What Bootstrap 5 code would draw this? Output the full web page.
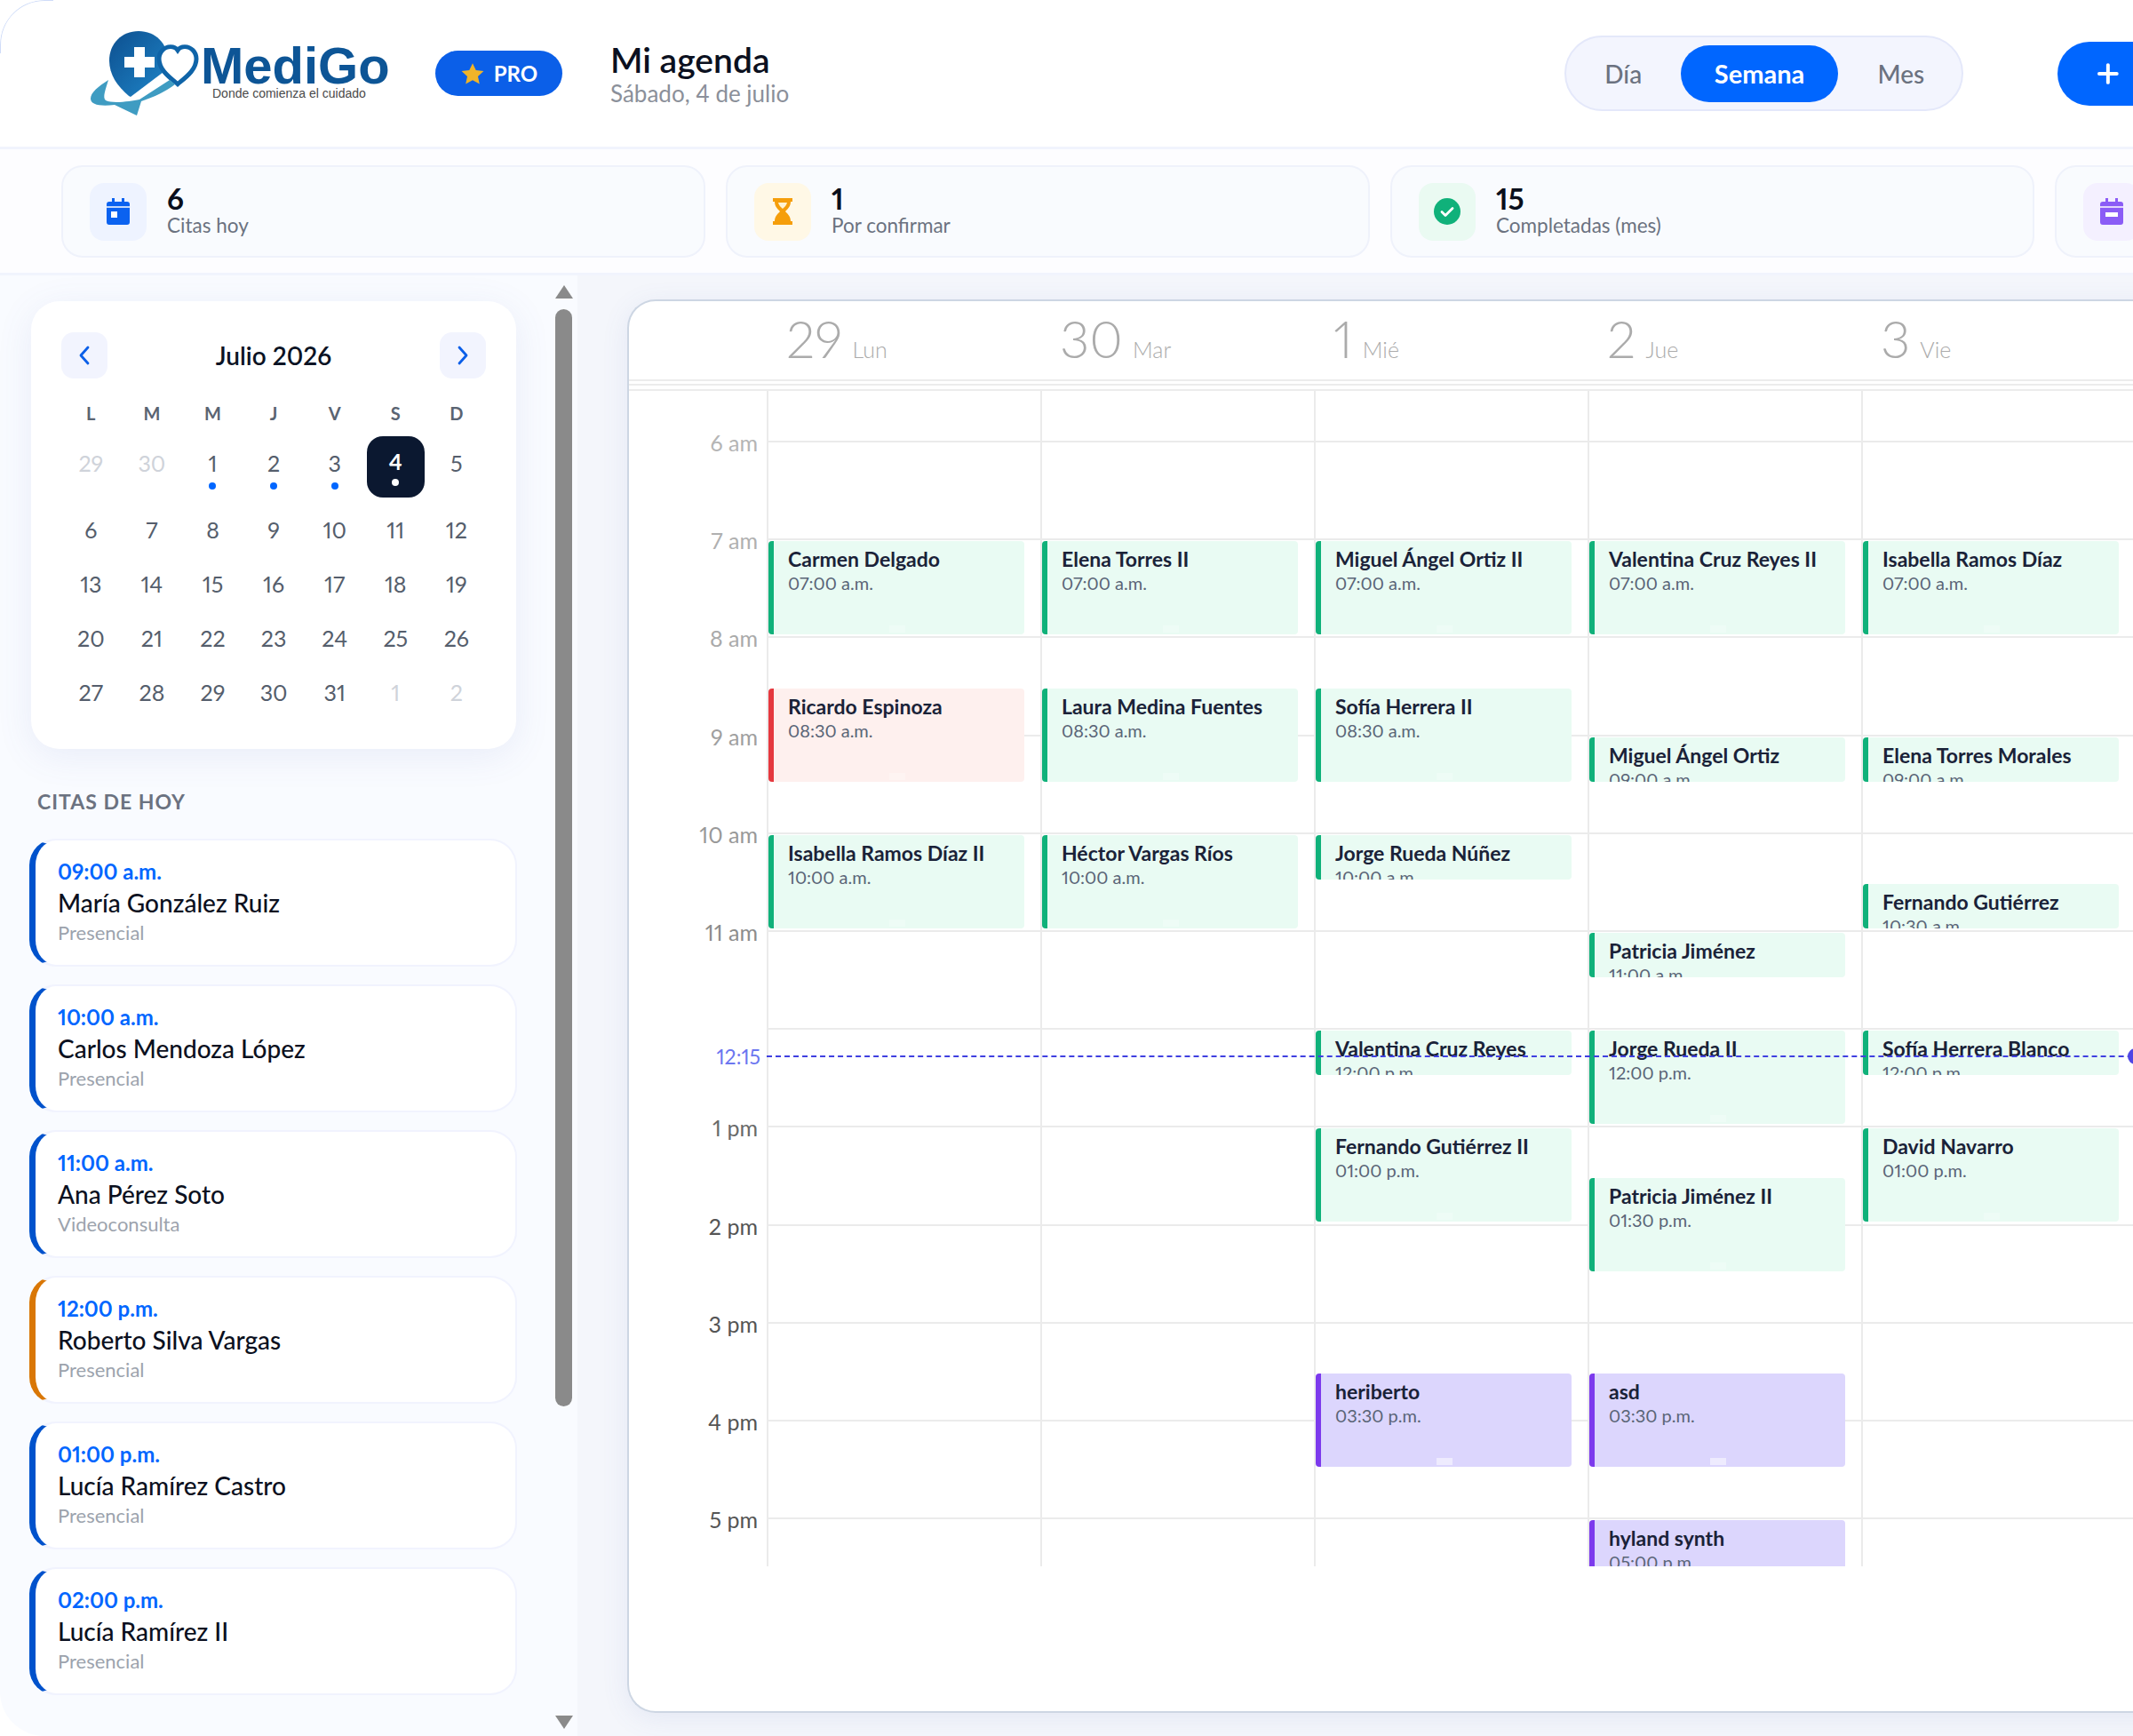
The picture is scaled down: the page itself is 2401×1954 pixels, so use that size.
<!DOCTYPE html>
<html lang="es">
<head>
    <meta charset="UTF-8">
    <meta name="viewport" content="width=device-width, initial-scale=1.0">
    <title>Mi agenda</title>
    <link href="https://cdn.jsdelivr.net/npm/bootstrap@5.3.2/dist/css/bootstrap.min.css" rel="stylesheet">
    <style>
        html, body { margin: 0; background: #fff; overflow: hidden; }
        body { font-family: "Lato", "Liberation Sans", sans-serif; font-variant-numeric: proportional-nums; color: #0f1729; width: 2401px; height: 1954px; }
        .app-shell { width: 2401px; height: 1954px; overflow: hidden; border-radius: 50px 0 0 50px; position: relative; }
        .app-shell::before { content: ""; position: absolute; left: 0; top: 0; width: 60px; height: 60px; border-top: 1px solid #cfdcf8; border-left: 1px solid #cfdcf8; border-top-left-radius: 50px; z-index: 5; }
        .app-inner { width: 2700px; }

        .top-bar { height: 168px; padding-left: 100px; padding-right: 164px; border-bottom: 3px solid #f1f4fd; background: #fff; }
        .logo-box { width: 340px; height: 105px; flex: none; }
        .pro-pill { width: 143px; height: 51px; margin-left: 50px; background: #0b5fe8; color: #fff; font-size: 24px; font-weight: 700; gap: 10px; }
        .title-box { margin-left: 54px; }
        .page-title { font-size: 39px; font-weight: 600; line-height: 44px; color: #0b1020; margin: 0; }
        .page-sub { font-size: 26px; line-height: 32px; color: #8b909a; }
        .seg-box { width: 449px; height: 85px; background: #f3f5fe; border: 2px solid #e4e8fa; padding: 0 9px; }
        .seg-btn { height: 64px; font-size: 28px; line-height: 64px; text-align: center; color: #6b7280; font-weight: 500; }
        .seg-dia { width: 121px; padding-right: 10px; }
        .seg-sem { width: 177px; background: #0066ff; color: #fff; font-weight: 700; font-size: 29px; }
        .seg-mes { width: 131px; padding-left: 12px; }
        .new-btn { width: 220px; height: 72px; margin-left: 106px; background: #0066ff; color: #fff; font-size: 27px; font-weight: 700; flex: none; border: 0; padding-left: 44px; gap: 12px; }
        .new-btn:hover { background: #0066ff; color: #fff; }

        .stat-row { height: 142px; padding: 18px 0 17px 69px; gap: 23px; background: #fdfdff; border-bottom: 3px solid #f1f4fd; }
        .stat-box { width: 725px; height: 104px; flex: none; background: #f9fbfe; border: 2px solid #eff2fb; border-radius: 24px; padding-left: 30px; gap: 23px; }
        .stat-ico { width: 64px; height: 65px; border-radius: 16px; flex: none; }
        .ico-blue { background: #eef3ff; }
        .ico-amber { background: #fff8e6; }
        .ico-green { background: #eafaf2; }
        .ico-purple { background: #f4f0ff; }
        .stat-num { font-size: 33px; line-height: 32px; font-weight: 700; color: #0a0f1c; }
        .stat-lbl { font-size: 22.5px; line-height: 30px; color: #6b7280; }

        .side-col { width: 650px; height: 1644px; background: #f9fbff; flex: none; }
        .side-main { width: 625px; padding: 29px 0 0 35px; flex: none; }
        .cal-box { width: 546px; height: 504px; background: #fff; border-radius: 32px; box-shadow: 0 8px 40px rgba(90, 110, 190, .1); padding: 35px 34px 0; }
        .cal-nav { width: 52px; height: 52px; background: #f2f4fe; border-radius: 14px; flex: none; }
        .cal-title { font-size: 28px; font-weight: 600; color: #0b1324; }
        .cal-grid { display: grid; grid-template-columns: repeat(7, 68.6px); margin-top: 22px; margin-left: -1px; }
        .cal-wd { height: 43px; line-height: 34px; text-align: center; font-size: 20px; font-weight: 700; color: #5a6472; }
        .cal-day { height: 61px; text-align: center; font-size: 25px; line-height: 60px; color: #555e6c; position: relative; }
        .cal-first { height: 75px; line-height: 61px; padding-top: 0; }
        .cal-off { color: #cfd3da; }
        .cal-dot { position: absolute; left: 50%; bottom: 15px; width: 8px; height: 8px; margin-left: -4px; border-radius: 50%; background: #0066ff; }
        .cal-today { width: 65px; height: 69px; margin: 0 auto; background: #0b1830; border-radius: 18px; color: #fff; font-weight: 700; line-height: 56px; position: relative; }
        .cal-today .cal-dot { background: #fff; bottom: 13px; }
        .sec-label { font-size: 23px; font-weight: 700; color: #6b7280; letter-spacing: 1px; margin: 43px 0 0 7px; line-height: 32px; }
        .appt-list { margin: 26px 0 0 -2px; width: 549px; gap: 20px; }
        .appt-box { height: 144px; background: #fff; border: 2px solid #f1f3fe; border-left: 7px solid #0052cc; border-radius: 30px; padding: 18px 0 0 25px; }
        .appt-orange { border-left-color: #d97706; }
        .appt-time { font-size: 24px; line-height: 34px; font-weight: 700; color: #0066ff; }
        .appt-name { font-size: 28px; line-height: 36px; font-weight: 500; color: #0b1020; }
        .appt-kind { font-size: 22px; line-height: 32px; color: #9ca3ad; }
        .scroll-col { width: 19px; height: 1644px; padding-top: 11px; flex: none; }
        .scroll-thumb { width: 19px; height: 1235px; margin-top: 12px; background: #8a8a8a; border-radius: 10px; }
        .arrow-up, .arrow-down { width: 0; height: 0; border-left: 10px solid transparent; border-right: 10px solid transparent; }
        .arrow-up { border-bottom: 15px solid #8a8a8a; }
        .arrow-down { border-top: 15px solid #8a8a8a; margin-top: 348px; }

        .main-col { height: 1644px; background: #f4f6fb; padding: 27px 0 0 56px; flex: 1 1 auto; }
        .week-box { width: 2005px; height: 1591px; background: #fff; border: 2px solid #cdd6e3; border-right: 0; border-radius: 32px 0 0 32px; box-shadow: 0 6px 30px rgba(90, 110, 190, .1); }
        .week-head { height: 101px; border-bottom: 2px solid #ececec; }
        .head-inner { height: 90px; border-bottom: 2px solid #ececec; padding-left: 155px; }
        .head-rule { height: 2px; margin-top: 3px; background: #ececec; }
        .head-day { width: 308px; padding: 7px 0 0 22px; color: #ababab; font-weight: 300; line-height: 70px; flex: none; }
        .head-num { font-size: 58px; }
        .head-wd { font-size: 25px; margin-left: 11px; }
        .week-body { height: 1323px; overflow: hidden; position: relative; }
        .time-col { width: 155px; padding-top: 46px; flex: none; }
        .time-lbl { height: 110.2px; line-height: 24px; font-size: 25px; padding-right: 10px; text-align: right; }
        .day-col { width: 308px; flex: none; border-left: 2px solid #ebebeb; position: relative; }
        .hour-line { position: absolute; left: 0; right: 0; height: 2px; background: #ebebeb; }
        .ev-item { position: absolute; left: 0; width: 288px; overflow: hidden; border-left: 6px solid #10b17a; background: #e9fbf3; border-radius: 4px; padding: 6px 0 0 16px; }
        .ev-red { border-left-color: #e5393f; background: #fef0ee; }
        .ev-violet { border-left-color: #7c3aed; background: #dcd6fd; }
        .ev-name { font-size: 23px; line-height: 28px; font-weight: 700; color: #1a2238; white-space: nowrap; }
        .ev-time { font-size: 20px; line-height: 26px; color: #5a6577; white-space: nowrap; }
        .ev-grip { position: absolute; bottom: 2px; left: 46%; width: 18px; height: 8px; background: rgba(255, 255, 255, .25); }
        .ev-violet .ev-grip { background: rgba(255, 255, 255, .5); }
        .now-line { position: absolute; left: 155px; right: 0; top: 748px; border-top: 2px dashed #4040e0; z-index: 3; }
        .now-lbl { position: absolute; left: 0; width: 148px; top: 737px; text-align: right; font-size: 23px; line-height: 24px; color: #6b76f0; }
        .now-dot { position: absolute; left: 1687px; top: 740px; width: 18px; height: 18px; border-radius: 50%; background: #4f46e5; z-index: 3; }
    </style>
</head>
<body>

<div class="app-shell">
<div class="app-inner">

    <header class="top-bar d-flex align-items-center">
        <svg class="logo-box" viewBox="100 30 340 105" xmlns="http://www.w3.org/2000/svg">
            <defs>
                <linearGradient id="pinGrad" x1="0" y1="0" x2="1" y2="1">
                    <stop offset="0" stop-color="#0d4f8f"/>
                    <stop offset="1" stop-color="#1f86c9"/>
                </linearGradient>
            </defs>
            <path d="M156 35c-19 0-33 14-33 33 0 16 9 29 22 40l2 1 41-31c1-3 1-7 1-10 0-19-14-33-33-33z" fill="url(#pinGrad)"/>
            <path d="M151 53h12v11h11v12h-11v11h-12V76h-11V64h11z" fill="#fff"/>
            <path d="M200 113c-8-7-21-16-21-29 0-8 6-14 13-14 3 0 6 1 8 4 2-3 5-4 8-4 7 0 13 6 13 14 0 13-13 22-21 29z" fill="#fff" stroke="#0f64a8" stroke-width="5" transform="translate(0 -16) scale(1 .98)"/>
            <path d="M122 90c-11 7-20 14-20 21 0 7 11 9 27 7l25 12 5-16c15-5 27-11 38-19l-6-5-34 22c-10 2-30 5-38 1-4-3 0-13 3-23z" fill="#3f9cc2"/>
            <text x="226" y="94" font-family="Liberation Sans, sans-serif" font-weight="700" font-size="58" fill="#0d5596">MediGo</text>
            <text x="239" y="110" font-family="Liberation Sans, sans-serif" font-size="14" fill="#4a4a4a">Donde comienza el cuidado</text>
        </svg>
        <div class="pro-pill rounded-pill d-flex align-items-center justify-content-center">
            <svg width="28" height="26" viewBox="0 0 24 23"><path d="M12 1l3.300 7 7.700.9-5.700 5.200 1.600 7.600L12 18l-6.900 3.700 1.600-7.600L1 8.900 8.700 8z" fill="#f0b429"/></svg>
            <span>PRO</span>
        </div>
        <div class="title-box">
            <h1 class="page-title">Mi agenda</h1>
            <div class="page-sub">Sábado, 4 de julio</div>
        </div>
        <div class="seg-box rounded-pill d-flex align-items-center ms-auto">
            <div class="seg-btn seg-dia">Día</div>
            <div class="seg-btn seg-sem rounded-pill">Semana</div>
            <div class="seg-btn seg-mes">Mes</div>
        </div>
        <button class="btn new-btn rounded-pill d-flex align-items-center" type="button">
            <svg width="26" height="26" viewBox="0 0 26 26"><path d="M13 3v20M3 13h20" stroke="#fff" stroke-width="4" stroke-linecap="round"/></svg>
            <span>Nueva cita</span>
        </button>
    </header>

    <section class="stat-row d-flex">
        <div class="stat-box d-flex align-items-center">
            <div class="stat-ico ico-blue d-flex align-items-center justify-content-center">
                <svg width="26" height="30" viewBox="0 0 26 30"><path d="M6 0h3v4h8V0h3v4h3a3 3 0 0 1 3 3v20a3 3 0 0 1-3 3H3a3 3 0 0 1-3-3V7a3 3 0 0 1 3-3h3z" fill="#0b62f0"/><path d="M0 10h26" stroke="#fff" stroke-width="1.500"/><rect x="5" y="15" width="7" height="7" fill="#fff"/></svg>
            </div>
            <div><div class="stat-num">6</div><div class="stat-lbl">Citas hoy</div></div>
        </div>
        <div class="stat-box d-flex align-items-center">
            <div class="stat-ico ico-amber d-flex align-items-center justify-content-center">
                <svg width="24" height="30" viewBox="0 0 24 30"><path d="M1 0h22v4h-2c0 5-3 8-6 11 3 3 6 6 6 11h2v4H1v-4h2c0-5 3-8 6-11C6 12 3 9 3 4H1z" fill="#f59e0b"/><path d="M7 5h10c-.5 3-3 5-5 7-2-2-4.500-4-5-7z" fill="#fff3d1"/></svg>
            </div>
            <div><div class="stat-num">1</div><div class="stat-lbl">Por confirmar</div></div>
        </div>
        <div class="stat-box d-flex align-items-center">
            <div class="stat-ico ico-green d-flex align-items-center justify-content-center">
                <svg width="30" height="30" viewBox="0 0 30 30"><circle cx="15" cy="15" r="15" fill="#10b17a"/><path d="M9 15.500l4 4 8-8" fill="none" stroke="#fff" stroke-width="2.800" stroke-linecap="round" stroke-linejoin="round"/></svg>
            </div>
            <div><div class="stat-num">15</div><div class="stat-lbl">Completadas (mes)</div></div>
        </div>
        <div class="stat-box d-flex align-items-center">
            <div class="stat-ico ico-purple d-flex align-items-center justify-content-center">
                <svg width="26" height="30" viewBox="0 0 26 30"><path d="M6 0h3v4h8V0h3v4h3a3 3 0 0 1 3 3v20a3 3 0 0 1-3 3H3a3 3 0 0 1-3-3V7a3 3 0 0 1 3-3h3z" fill="#8b5cf6"/><path d="M0 10h26" stroke="#fff" stroke-width="1.500"/><rect x="6" y="16" width="14" height="5" fill="#fff"/></svg>
            </div>
            <div><div class="stat-num">2</div><div class="stat-lbl">Canceladas</div></div>
        </div>
    </section>

    <div class="d-flex">
        <aside class="side-col d-flex">
            <div class="side-main">
                <div class="cal-box">
                    <div class="d-flex align-items-center justify-content-between">
                        <div class="cal-nav d-flex align-items-center justify-content-center">
                            <svg width="14" height="24" viewBox="0 0 14 24"><path d="M11 3L3 12l8 9" fill="none" stroke="#0b5fe8" stroke-width="2.800" stroke-linecap="round" stroke-linejoin="round"/></svg>
                        </div>
                        <div class="cal-title">Julio 2026</div>
                        <div class="cal-nav d-flex align-items-center justify-content-center">
                            <svg width="14" height="24" viewBox="0 0 14 24"><path d="M3 3l8 9-8 9" fill="none" stroke="#0b5fe8" stroke-width="2.800" stroke-linecap="round" stroke-linejoin="round"/></svg>
                        </div>
                    </div>
                    <div class="cal-grid" id="calGrid"></div>
                </div>
                <div class="sec-label">CITAS DE HOY</div>
                <div class="appt-list d-flex flex-column" id="apptList"></div>
            </div>
            <div class="scroll-col">
                <div class="arrow-up"></div>
                <div class="scroll-thumb"></div>
                <div class="arrow-down"></div>
            </div>
        </aside>

        <main class="main-col">
            <div class="week-box">
                <div class="week-head">
                    <div class="head-inner d-flex" id="weekHead"></div>
                    <div class="head-rule"></div>
                </div>
                <div class="week-body d-flex" id="weekBody">
                    <div class="time-col" id="timeCol"></div>
                    <div class="now-lbl">12:15</div>
                    <div class="now-line"></div>
                    <div class="now-dot"></div>
                </div>
            </div>
        </main>
    </div>

</div>
</div>

<script src="https://cdn.jsdelivr.net/npm/bootstrap@5.3.2/dist/js/bootstrap.bundle.min.js"></script>
<script>
    const HOUR = 110.2;

    // calendario lateral
    const calGrid = document.getElementById("calGrid");
    ["L","M","M","J","V","S","D"].forEach(d => {
        let el = document.createElement("div");
        el.className = "cal-wd";
        el.innerText = d;
        calGrid.appendChild(el);
    });
    const days = [29,30,1,2,3,4,5,6,7,8,9,10,11,12,13,14,15,16,17,18,19,20,21,22,23,24,25,26,27,28,29,30,31,1,2];
    days.forEach((n, i) => {
        let el = document.createElement("div");
        el.className = "cal-day" + (i < 7 ? " cal-first" : "");
        if (i < 2 || i > 32) el.className += " cal-off";
        if (i === 5) {
            let t = document.createElement("div");
            t.className = "cal-today";
            t.innerText = n;
            let dot = document.createElement("span");
            dot.className = "cal-dot";
            t.appendChild(dot);
            el.appendChild(t);
        } else {
            el.innerText = n;
            if (i >= 2 && i <= 4) {
                let dot = document.createElement("span");
                dot.className = "cal-dot";
                el.appendChild(dot);
            }
        }
        calGrid.appendChild(el);
    });

    // citas de hoy
    const appts = [
        ["09:00 a.m.", "María González Ruiz", "Presencial", ""],
        ["10:00 a.m.", "Carlos Mendoza López", "Presencial", ""],
        ["11:00 a.m.", "Ana Pérez Soto", "Videoconsulta", ""],
        ["12:00 p.m.", "Roberto Silva Vargas", "Presencial", "appt-orange"],
        ["01:00 p.m.", "Lucía Ramírez Castro", "Presencial", ""],
        ["02:00 p.m.", "Lucía Ramírez II", "Presencial", ""]
    ];
    const apptList = document.getElementById("apptList");
    appts.forEach(a => {
        let box = document.createElement("div");
        box.className = "appt-box " + a[3];
        box.innerHTML = '<div class="appt-time">' + a[0] + '</div><div class="appt-name">' + a[1] + '</div><div class="appt-kind">' + a[2] + '</div>';
        apptList.appendChild(box);
    });

    // cabecera de semana
    const weekHead = document.getElementById("weekHead");
    [["29","Lun"],["30","Mar"],["1","Mié"],["2","Jue"],["3","Vie"],["4","Sáb"]].forEach(d => {
        let el = document.createElement("div");
        el.className = "head-day";
        el.innerHTML = '<span class="head-num">' + d[0] + '</span><span class="head-wd">' + d[1] + '</span>';
        weekHead.appendChild(el);
    });

    // horas
    const timeCol = document.getElementById("timeCol");
    const hours = [["6 am","#b5b5b5"],["7 am","#b0b0b0"],["8 am","#aaaaaa"],["9 am","#a0a0a0"],["10 am","#999999"],["11 am","#8d8d8d"],["",""],["1 pm","#6a6a6a"],["2 pm","#555555"],["3 pm","#555555"],["4 pm","#555555"],["5 pm","#555555"]];
    hours.forEach(h => {
        let el = document.createElement("div");
        el.className = "time-lbl";
        el.innerText = h[0];
        el.style.color = h[1];
        timeCol.appendChild(el);
    });

    // eventos por columna: nombre, hora decimal, etiqueta, tipo, corto
    const events = [
        [["Carmen Delgado",7,"07:00 a.m."],["Ricardo Espinoza",8.5,"08:30 a.m.","ev-red"],["Isabella Ramos Díaz II",10,"10:00 a.m."]],
        [["Elena Torres II",7,"07:00 a.m."],["Laura Medina Fuentes",8.5,"08:30 a.m."],["Héctor Vargas Ríos",10,"10:00 a.m."]],
        [["Miguel Ángel Ortiz II",7,"07:00 a.m."],["Sofía Herrera II",8.5,"08:30 a.m."],["Jorge Rueda Núñez",10,"10:00 a.m.","",1],["Valentina Cruz Reyes",12,"12:00 p.m.","",1],["Fernando Gutiérrez II",13,"01:00 p.m."],["heriberto",15.5,"03:30 p.m.","ev-violet"]],
        [["Valentina Cruz Reyes II",7,"07:00 a.m."],["Miguel Ángel Ortiz",9,"09:00 a.m.","",1],["Patricia Jiménez",11,"11:00 a.m.","",1],["Jorge Rueda II",12,"12:00 p.m."],["Patricia Jiménez II",13.5,"01:30 p.m."],["asd",15.5,"03:30 p.m.","ev-violet"],["hyland synth",17,"05:00 p.m.","ev-violet"]],
        [["Isabella Ramos Díaz",7,"07:00 a.m."],["Elena Torres Morales",9,"09:00 a.m.","",1],["Fernando Gutiérrez",10.5,"10:30 a.m.","",1],["Sofía Herrera Blanco",12,"12:00 p.m.","",1],["David Navarro",13,"01:00 p.m."]],
        []
    ];
    const weekBody = document.getElementById("weekBody");
    events.forEach(list => {
        let col = document.createElement("div");
        col.className = "day-col";
        for (let h = 0; h < 12; h++) {
            let line = document.createElement("div");
            line.className = "hour-line";
            line.style.top = (56 + h * HOUR) + "px";
            col.appendChild(line);
        }
        list.forEach(e => {
            let ev = document.createElement("div");
            ev.className = "ev-item " + (e[3] || "");
            ev.style.top = (59 + (e[1] - 6) * HOUR) + "px";
            ev.style.height = (e[4] ? 50 : 105) + "px";
            ev.innerHTML = '<div class="ev-name">' + e[0] + '</div><div class="ev-time">' + e[2] + '</div>' + (e[4] ? '' : '<span class="ev-grip"></span>');
            col.appendChild(ev);
        });
        weekBody.appendChild(col);
    });
</script>
</body>
</html>
